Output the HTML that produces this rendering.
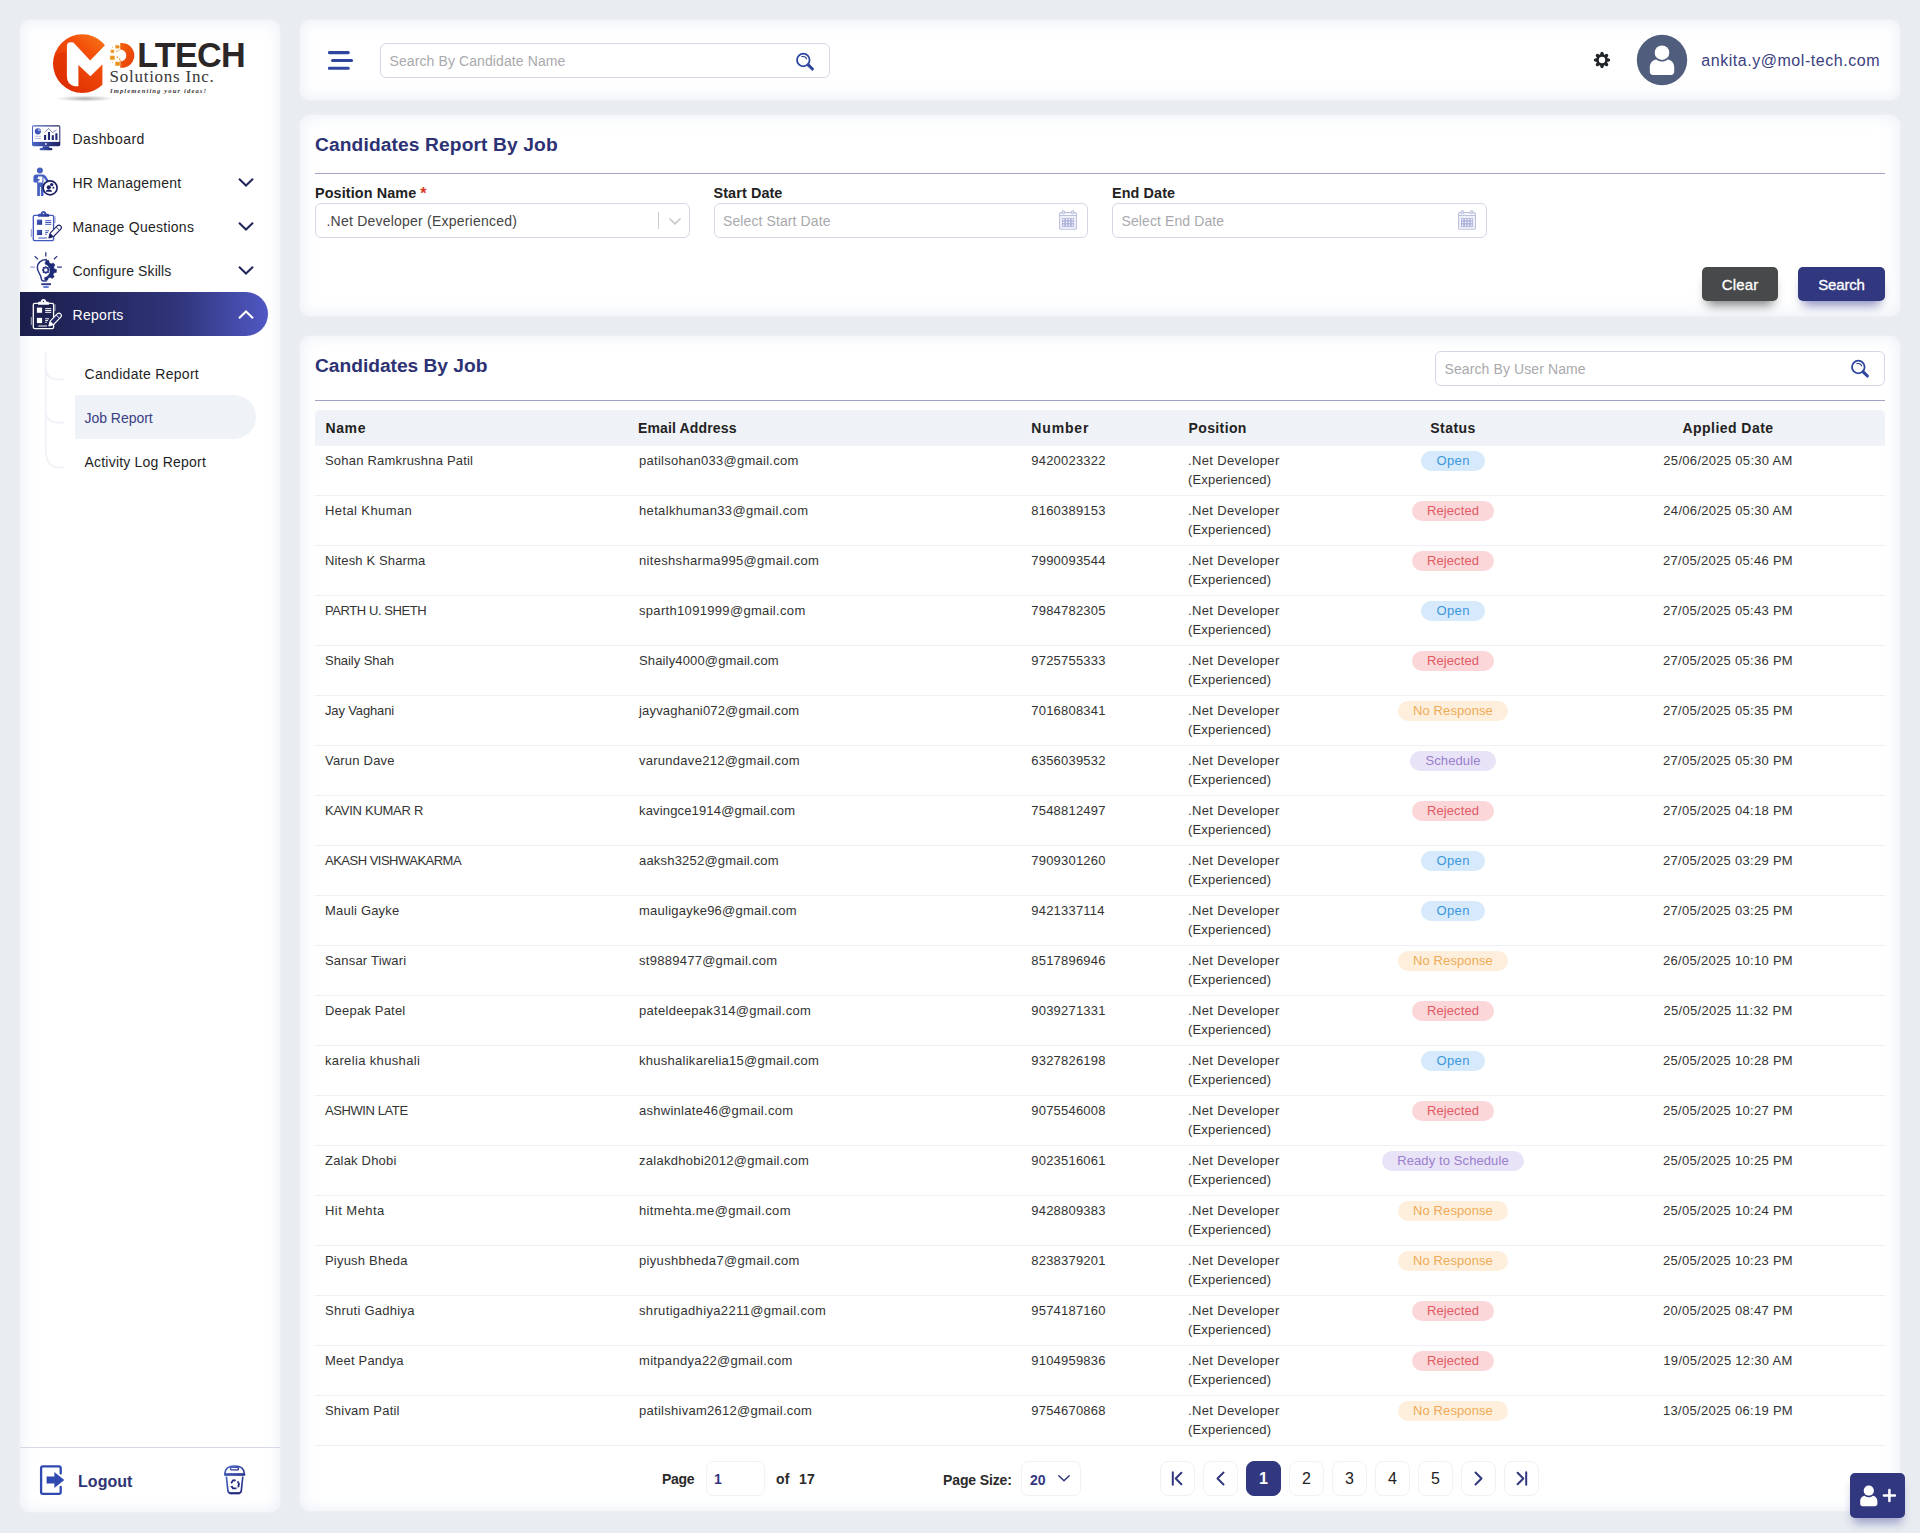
<!DOCTYPE html>
<html lang="en">
<head>
<meta charset="utf-8">
<title>Candidates Report By Job</title>
<style>
*{box-sizing:border-box;margin:0;padding:0}
html,body{width:1920px;height:1533px;overflow:hidden}
body{background:#e9ecf1;font-family:"Liberation Sans",sans-serif;color:#222;position:relative}
.card{position:absolute;background:#fff;border-radius:10px;box-shadow:inset 0 0 14px 2px rgba(224,231,242,.62),0 0 3px rgba(255,255,255,.5)}
.abs{position:absolute}
/* sidebar */
#side{left:20px;top:20px;width:260px;height:1492px}
.mi{position:absolute;left:0;width:248px;height:44px}
.mi .t{position:absolute;left:52.500px;top:1px;line-height:44px;font-size:14px;letter-spacing:.3px;color:#1f1f1f;white-space:nowrap}
.mi svg.ic{position:absolute}
.mi svg.ch{position:absolute;left:217px;top:17px}
.mi.act{background:linear-gradient(90deg,#1b1e4b 0%,#252963 35%,#31367c 65%,#5058c4 100%);border-radius:0 22px 22px 0}
.mi.act .t{color:#fff}
.si{position:absolute;left:55px;width:181px;height:44px;border-radius:0 22px 22px 0}
.si .t{position:absolute;left:9.500px;top:1px;line-height:44px;font-size:14px;letter-spacing:.3px;color:#1f1f1f;white-space:nowrap}
.si.act{background:#eff2f6}
.si.act .t{color:#3a4186}
#sdiv{left:0;top:1427px;width:260px;height:1px;background:#d5d8e6}
#logout{left:58px;top:1450.500px;font-size:16px;font-weight:700;color:#2f3472;line-height:22px;letter-spacing:.05px}
/* topbar */
#top{left:300px;top:20px;width:1600px;height:80px}
.inp{position:absolute;border:1px solid #d5d7e9;border-radius:6px;background:#fff;height:35px}
.inp .ph{position:absolute;left:8.500px;top:1px;line-height:33px;font-size:14px;color:#a9a9ad;letter-spacing:.1px;white-space:nowrap}
#email{right:20px;top:28px;line-height:26px;font-size:16px;color:#3a4080;letter-spacing:.54px;white-space:nowrap}
/* filter card */
#filt{left:300px;top:115px;width:1600px;height:201px}
h2{position:absolute;left:15px;font-size:19.200px;font-weight:700;color:#2c3274;white-space:nowrap;line-height:24px}
.hr{position:absolute;left:15px;width:1570px;height:1px;background:#a0a2c6}
.lbl{position:absolute;font-size:14.400px;font-weight:700;color:#222;line-height:18px;letter-spacing:.1px;white-space:nowrap}
.btn{position:absolute;top:152px;height:34px;border-radius:5px;color:#fff;font-size:15px;text-align:center;line-height:36px;letter-spacing:.15px;-webkit-text-stroke:.3px #fff}
/* table card */
#tbl{left:300px;top:336px;width:1600px;height:1175px}
#thead{position:absolute;left:15px;top:73.500px;width:1570px;height:36.500px;background:#eff2f6;border-radius:5px 5px 0 0}
#thead div{position:absolute;top:.5px;line-height:36px;font-size:14px;font-weight:700;color:#222;letter-spacing:.45px;white-space:nowrap}
.row{position:absolute;left:15px;width:1570px;height:50px;border-bottom:1px solid #eef0f4;font-size:13px;color:#333;letter-spacing:.2px}
.row div{position:absolute;top:5px;line-height:19px;white-space:nowrap}
.c1{left:10px}.c2{left:324px;letter-spacing:.27px}.c3{left:716.300px;letter-spacing:.2px}.c4{left:873px;letter-spacing:.35px}
.l2{letter-spacing:.18px}
.c5{left:1043px;width:190px;text-align:center}
.c6{left:1313px;width:200px;text-align:center;letter-spacing:.3px}
.bdg{display:inline-block;height:20px;line-height:20px;border-radius:10px;padding:0 15px;font-size:13px;letter-spacing:.1px;vertical-align:top}
.b-open{background:#d6eafb;color:#3b97de;letter-spacing:.35px;padding:0 15px 0 15.300px}
.b-rej{background:#fbd7d9;color:#e05a64}
.b-nor{background:#fdefdb;color:#efab57}
.b-sch{background:#e8e3f6;color:#9a7ed0}
.pg{position:absolute;top:1125px;width:35px;height:35px;border:1px solid #f1f2f6;border-radius:8px;text-align:center;line-height:33px;font-size:16px;color:#222}
.pg.on{background:#32387f;border-color:#32387f;color:#fff;font-weight:700}
.pg svg{position:absolute;left:0;top:0}
.pl{position:absolute;font-size:14px;font-weight:700;color:#2a2a2a;line-height:20px;letter-spacing:.3px;white-space:nowrap}
.pbox{position:absolute;top:1125px;height:35px;border:1px solid #f0f2f7;border-radius:7px;background:#fff}
#fab{left:1850px;top:1473px;width:55px;height:45px;border-radius:5px;background:#32387f;box-shadow:0 8px 10px -3px rgba(60,66,150,.45)}
</style>
</head>
<body>

<!-- SIDEBAR -->
<div class="card" id="side">
<svg class="abs" style="left:20px;top:5px" width="220" height="90" viewBox="40 25 220 90">
<defs>
<linearGradient id="lg1" x1="0.85" y1="0.05" x2="0.2" y2="0.9"><stop offset="0" stop-color="#f5821c"/><stop offset=".35" stop-color="#f4510a"/><stop offset="1" stop-color="#dd2c02"/></linearGradient>
<linearGradient id="lg2" x1="0" y1="0" x2="1" y2="1"><stop offset="0" stop-color="#f4620e"/><stop offset="1" stop-color="#e63a04"/></linearGradient>
<radialGradient id="lsh" cx=".5" cy=".5" r=".5"><stop offset="0" stop-color="#7d7d7d" stop-opacity=".62"/><stop offset=".6" stop-color="#9a9a9a" stop-opacity=".3"/><stop offset="1" stop-color="#bbb" stop-opacity="0"/></radialGradient>
<mask id="lmk" maskUnits="userSpaceOnUse" x="45" y="28" width="80" height="75"><circle cx="82.3" cy="63.6" r="29.3" fill="#fff"/><path d="M70.4 42.2 L73.4 42.4 L90.2 60.6 L105.9 44.300 L122 30 L122 100 L102.4 100 L102.4 64.6 L90.4 76.2 L78.4 65 L78.4 86.2 L74.5 86.2 Q66.9 84.5 66.9 76 L66.9 46 Q66.9 42.2 70.4 42.2Z" fill="#000"/></mask>
</defs>
<ellipse cx="85" cy="98.6" rx="30" ry="3.2" fill="url(#lsh)"/>
<g mask="url(#lmk)">
<rect x="50" y="30" width="70" height="70" fill="url(#lg1)"/>
<path d="M50 58 Q60 52 72 51 L72 100 L50 100Z" fill="#de2d00" opacity=".55"/>
</g>
<path d="M120.300 43.100 A12.4 12.4 0 1 1 120.300 67.700 L120.300 61.500 A6 6 0 0 0 120.300 49.500Z" fill="url(#lg2)"/>
<g fill="#e8911f" stroke="#f6c070" stroke-width=".5">
<rect x="115.3" y="45.2" width="3.9" height="3"/><rect x="110.9" y="49.9" width="3.1" height="3"/><rect x="110.1" y="55.9" width="4.6" height="3.9"/><rect x="115.3" y="61.9" width="4.6" height="3.9"/>
</g>
<g fill="#e57a18"><rect x="116.3" y="50.6" width="1.2" height="1.2"/><rect x="118.4" y="49.6" width="1" height="1"/><rect x="116.7" y="56.6" width="1.3" height="1.3"/><rect x="119" y="58.6" width="1.2" height="1.2"/><rect x="120.3" y="44.2" width="1" height="1"/><rect x="119.8" y="47.2" width="1" height="1"/><rect x="112" y="46.8" width=".8" height=".8"/><rect x="112.3" y="61.8" width=".9" height=".9"/><rect x="120.3" y="60.4" width="1" height="1"/><rect x="120.6" y="64.3" width="1" height="1"/></g>
<text x="137.200" y="66.7" font-family="Liberation Sans, sans-serif" font-weight="700" font-size="34.2" fill="#2b2727" letter-spacing="-.7">LTECH</text>
<text x="109.5" y="82.3" font-family="Liberation Serif, serif" font-size="17" fill="#3a3838" letter-spacing=".75">Solutions Inc.</text>
<text x="110" y="93" font-family="Liberation Serif, serif" font-style="italic" font-weight="700" font-size="6.6" fill="#3a3838" letter-spacing="1.12">Implementing your ideas!</text>
</svg>
<svg width="0" height="0" style="position:absolute"><defs>
<linearGradient id="ig" x1="0" y1="0" x2="1" y2="0"><stop offset="0" stop-color="#4a66c8"/><stop offset="1" stop-color="#1b1f5e"/></linearGradient>
<linearGradient id="ig2" x1="0" y1="0" x2="1" y2="1"><stop offset="0" stop-color="#4864c6"/><stop offset="1" stop-color="#27328a"/></linearGradient>
</defs></svg>
<div class="mi" style="top:96px"><svg class="ic" style="left:10px;top:7px" width="34" height="30" viewBox="30 123 34 30">
<rect x="32" y="125.2" width="28.3" height="21" rx="1.6" fill="url(#ig)"/>
<rect x="33" y="126.5" width="26.3" height="15.4" fill="#fff"/>
<circle cx="37.9" cy="131.3" r="3.1" fill="#3d55b8"/><path d="M37.9 131.3V128.2A3.1 3.1 0 0 1 41 131.3Z" fill="#8fa0dc"/>
<path d="M34.7 136.3h6.3M34.7 138.5h6.3" stroke="#b9bede" stroke-width="1.1"/>
<path d="M45.1 139.9v-5M49 139.9v-7.9M52.8 139.9v-4.7M56.4 139.9v-6.7" stroke="#202a78" stroke-width="2.1"/>
<path d="M44.9 132.3l3.8-3.9 3.7 4.2 4.2-2.6" fill="none" stroke="#4a5590" stroke-width=".7"/>
<circle cx="45.9" cy="144.1" r="1" fill="#dfe4f7"/>
<path d="M43 146.2h6l.8 2h-7.6z" fill="#2c3c98"/>
<rect x="39.6" y="148" width="12.8" height="2.3" rx="1.1" fill="url(#ig)"/>
</svg><span class="t" style="letter-spacing:.42px">Dashboard</span></div>
<div class="mi" style="top:140px"><svg class="ic" style="left:10px;top:5px" width="34" height="34" viewBox="30 165 34 34">
<circle cx="39.9" cy="170.6" r="3" fill="#4661c2"/>
<path d="M37.3 174.4h5.2c1.3 0 2.4.5 3.2 1.6l3 4.6-1.9 1.3-3.3-4.6v18.6h-2.6v-9h-1v9h-2.7v-13.4h-2.3c-.9 0-1.5-.6-1.5-1.5v-3.600c0-1.700 1.200-3 2.900-3z" fill="#4560c0"/>
<path d="M38.3 176.6h4.100v5.800h-4.100v-1.800h1.300v-1.500h-2.200z" fill="#fff"/>
<circle cx="50.1" cy="187.8" r="7" fill="#fff" stroke="#1d2164" stroke-width="1.7"/>
<circle cx="51.7" cy="184.600" r="1.700" fill="#1d2470"/><path d="M52.800 186.5c1.200.3 1.800 1 1.800 2h-2.300z" fill="#1d2470"/>
<circle cx="48.800" cy="187.300" r="2.100" fill="#1b2268"/><path d="M45.800 191.700c0-1.600 1.200-2.300 3-2.300s3.200.7 3.200 2.300z" fill="#1b2268"/>
</svg><span class="t" style="letter-spacing:.24px">HR Management</span><svg class="ch" width="18" height="11" viewBox="0 0 18 11"><path d="M2 1.8 L9 8.5 L16 1.8" fill="none" stroke="#23265a" stroke-width="2.1" stroke-linecap="butt" stroke-linejoin="miter"/></svg></div>
<div class="mi" style="top:184px"><svg class="ic" style="left:9px;top:3px" width="36" height="36" viewBox="29 206.900 36 36">
<rect x="33.300" y="215.200" width="20.300" height="25.300" rx="1.400" fill="none" stroke="#4058ba" stroke-width="1.300"/>
<path d="M38 216.700v-1.800c0-.7.500-1.200 1.200-1.200h1.400c.2-1.700 1.400-2.900 2.900-2.900s2.700 1.200 2.900 2.900h1.400c.7 0 1.200.5 1.200 1.200v1.800z" fill="url(#ig2)"/>
<circle cx="43.500" cy="213.400" r=".700" fill="#fff"/>
<rect x="36.900" y="219.500" width="5.200" height="5.200" fill="url(#ig2)"/><rect x="36.900" y="229.800" width="5.200" height="5.200" fill="url(#ig2)"/>
<path d="M45.200 220.600h6.100M45.200 222.400h6.100M45.200 224.200h6.100M45.200 230.700h3.800M45.200 232.500h2.800M45.200 234.200h1.600M38.300 237.900h8.600" stroke="#4058ba" stroke-width="1"/>
<path d="M31.300 229v7.800M55 216.200v6.800" stroke="#4058ba" stroke-width=".9" opacity=".7"/>
<path d="M48.900 237.800l1.300-4.800 7-7.200c1-1 2.400-1 3.400 0 1 1 1 2.400 0 3.400l-7 7.200z" fill="#fff" stroke="#1c2268" stroke-width="1.100" stroke-linejoin="round"/>
<path d="M48.900 237.800l1.300-4.800 3.400 3.400z" fill="#1c2268"/>
<path d="M56.200 226.800l3.400 3.400" stroke="#1c2268" stroke-width=".9"/>
</svg><span class="t" style="letter-spacing:.26px">Manage Questions</span><svg class="ch" width="18" height="11" viewBox="0 0 18 11"><path d="M2 1.8 L9 8.5 L16 1.8" fill="none" stroke="#23265a" stroke-width="2.1" stroke-linecap="butt" stroke-linejoin="miter"/></svg></div>
<div class="mi" style="top:228px"><svg class="ic" style="left:8px;top:2px" width="38" height="40" viewBox="28 250 38 40">
<path d="M45.800 252.300v4.100M34.700 256.100l3.200 3.200M57.200 256.100l-3.300 3.200M57.100 267.100h4.800" stroke="#2b3684" stroke-width="1.300" fill="none"/>
<path d="M30.100 267.100h4.800" stroke="#9aa8e0" stroke-width="1.300"/>
<path d="M46.300 259.500c-5.200.1-9 3.700-9 8 0 3.200 1.800 5.200 3 7.800.6 1.300.9 2.500 1.100 3.700.2 1.300 1 2.100 2.300 2.100h2.500" fill="none" stroke="#2b3684" stroke-width="1.500" stroke-linecap="round"/>
<path d="M45.300 262.300l.9-2.200 2.700.5.300 2.200c.7.300 1.300.7 1.900 1.100l2.100-1 1.800 2.100-1.300 1.900c.3.600.5 1.300.6 2l2.200.7-.2 2.800-2.300.4c-.2.700-.5 1.300-.9 1.900l1.100 2.100-2.100 1.800-1.900-1.300c-.6.300-1.300.6-2 .7l-.6 2.200-2.700-.1-.5-2.400c3.200-.6 5.700-3.500 5.700-6.900 0-3.300-2.200-6-5.100-6.800z" fill="#1c2a78" stroke="#1c2a78" stroke-width=".5" stroke-linejoin="round"/>
<g fill="none" stroke="#2b3684"><circle cx="45.800" cy="270" r="2.500" stroke-width="1.500"/><path d="M45.800 266.200v1.200M45.800 272.600v1.200M42 270h1.200M48.400 270h1.200M43.100 267.300l.9.900M47.600 271.800l.9.900M43.100 272.700l.9-.9M47.600 268.200l.9-.9" stroke-width="1.500"/></g>
<path d="M41.300 284.200h9.700" stroke="#2b3684" stroke-width="1.900"/>
<path d="M43.300 287h5.400" stroke="#5d78d4" stroke-width="1.900"/>
</svg><span class="t" style="letter-spacing:.1px">Configure Skills</span><svg class="ch" width="18" height="11" viewBox="0 0 18 11"><path d="M2 1.8 L9 8.5 L16 1.8" fill="none" stroke="#23265a" stroke-width="2.1" stroke-linecap="butt" stroke-linejoin="miter"/></svg></div>
<div class="mi act" style="top:272px"><svg class="ic" style="left:9px;top:3px" width="36" height="36" viewBox="29 206.900 36 36">
<rect x="33.300" y="215.200" width="20.300" height="25.300" rx="1.400" fill="none" stroke="#fff" stroke-width="1.300"/>
<path d="M38 216.700v-1.800c0-.7.500-1.200 1.200-1.200h1.400c.2-1.700 1.400-2.900 2.900-2.900s2.700 1.200 2.900 2.900h1.400c.7 0 1.200.5 1.200 1.200v1.800z" fill="#fff"/>
<circle cx="43.500" cy="213.400" r=".700" fill="#262a66"/>
<rect x="36.900" y="219.500" width="5.200" height="5.200" fill="#fff"/><rect x="36.900" y="229.800" width="5.200" height="5.200" fill="#fff"/>
<path d="M45.200 220.600h6.100M45.200 222.400h6.100M45.200 224.200h6.100M45.200 230.700h3.800M45.200 232.500h2.800M45.200 234.200h1.600M38.300 237.900h8.600" stroke="#fff" stroke-width="1"/>
<path d="M31.300 229v7.800M55 216.200v6.800" stroke="#fff" stroke-width=".9" opacity=".7"/>
<path d="M48.900 237.800l1.300-4.800 7-7.200c1-1 2.400-1 3.400 0 1 1 1 2.400 0 3.400l-7 7.200z" fill="#262a66" stroke="#fff" stroke-width="1.100" stroke-linejoin="round"/>
<path d="M48.900 237.800l1.300-4.800 3.400 3.400z" fill="#fff"/>
<path d="M56.200 226.800l3.400 3.400" stroke="#fff" stroke-width=".9"/>
</svg><span class="t">Reports</span><svg class="ch" width="18" height="11" viewBox="0 0 18 11"><path d="M2 9.2 L9 2.5 L16 9.2" fill="none" stroke="#fff" stroke-width="2.1" stroke-linecap="butt" stroke-linejoin="miter"/></svg></div>
<svg class="abs" style="left:20px;top:325px" width="40" height="130" viewBox="40 345 40 130"><path d="M45.700 351.500V450 M45.700 367.300q0 12 12 12h7 M45.700 410.600q0 12 12 12h7 M45.700 448q0 19.300 12 19.300h7" fill="none" stroke="#f0f2f7" stroke-width="1.800"/></svg>
<div class="si" style="top:331px"><span class="t">Candidate Report</span></div>
<div class="si act" style="top:375px"><span class="t" style="letter-spacing:-.03px">Job Report</span></div>
<div class="si" style="top:419px"><span class="t" style="letter-spacing:.21px">Activity Log Report</span></div>
<div class="abs" id="sdiv"></div>
<svg class="abs" style="left:18px;top:1443px" width="30" height="34" viewBox="38 1463 30 34">
<path d="M60.700 1473.500v-5.300c0-1-.8-1.800-1.800-1.800h-16c-1 0-1.800.8-1.800 1.800v23.800c0 1 .8 1.800 1.800 1.800h16c1 0 1.800-.8 1.800-1.800v-5.200" fill="none" stroke="#2f49b0" stroke-width="2.300" stroke-linecap="round"/>
<path d="M46.600 1476.600h7.800v-4.600l9.800 8-9.800 8v-4.600h-7.800z" fill="#2f49b0"/>
</svg>
<div class="abs" id="logout">Logout</div>
<svg class="abs" style="left:202px;top:1443px" width="26" height="34" viewBox="222 1463 26 34">
<defs><linearGradient id="tg" x1="0" y1="0" x2="1" y2="1"><stop offset="0" stop-color="#4a66c8"/><stop offset="1" stop-color="#232a7c"/></linearGradient></defs>
<path d="M224.800 1474.300c0-5.500 4-8.300 9.800-8.300s9.800 2.800 9.800 8.300z" fill="#fff" stroke="url(#tg)" stroke-width="1.700"/>
<rect x="230.600" y="1467.300" width="7.800" height="2.600" rx="1" fill="#fff" stroke="url(#tg)" stroke-width="1.400"/>
<rect x="224" y="1473.200" width="21.200" height="2.600" rx="1.300" fill="url(#tg)"/>
<path d="M226.400 1476.500l1.500 14.200c.2 1.600 1.100 2.500 2.700 2.500h8c1.600 0 2.500-.9 2.700-2.500l1.500-14.200" fill="#fff" stroke="url(#tg)" stroke-width="1.700"/>
<path d="M229.500 1493.400h10.200" stroke="#232a7c" stroke-width="1.900"/>
<g fill="none" stroke="#232a7c" stroke-width="1.800"><path d="M231.200 1483.200l1.800-2.900 1.800 0"/><path d="M237.600 1481.300l1.500 2.900-1 1.800"/><path d="M236.500 1488.300h-3.600l-1-1.900"/></g>
<g fill="#232a7c"><path d="M234.300 1478.900l2 1.400-2 1.400z"/><path d="M239.800 1486.800l-2.300.9.300-2.400z"/><path d="M230.400 1486.200l2.300-.5-.9 2.200z"/></g>
</svg>
</div>

<!-- TOPBAR -->
<div class="card" id="top">
<svg class="abs" style="left:28px;top:30px" width="26" height="21" viewBox="0 0 26 21"><path d="M1.450 2.600H20.250M4.550 10.500H23.550M1.450 18.300H20.250" fill="none" stroke="#2f469f" stroke-width="3.100" stroke-linecap="round"/></svg>
<div class="inp" style="left:80px;top:23px;width:450px"><span class="ph">Search By Candidate Name</span><svg style="position:absolute;left:414px;top:8.300px" width="20" height="20" viewBox="0 0 20 20"><circle cx="8.300" cy="8" r="6.300" fill="none" stroke="#2f469f" stroke-width="1.800"/><path d="M13.200 12.800l4.200 4.200" stroke="#2f469f" stroke-width="3.100" stroke-linecap="round"/><path d="M6.400 4.700a4.100 4.100 0 0 1 5.300 2.500" fill="none" stroke="#2c3f8c" stroke-width="1.100"/></svg></div>
<svg class="abs" style="left:1291.900px;top:29.900px" width="20" height="20" viewBox="-10 -10 20 20"><g fill="#212529"><circle r="5.900"/><g transform="rotate(0)"><rect x="-1.600" y="-6.600" width="3.200" height="3"/><circle cx="0" cy="-6.600" r="1.600"/></g><g transform="rotate(45)"><rect x="-1.600" y="-6.600" width="3.200" height="3"/><circle cx="0" cy="-6.600" r="1.600"/></g><g transform="rotate(90)"><rect x="-1.600" y="-6.600" width="3.200" height="3"/><circle cx="0" cy="-6.600" r="1.600"/></g><g transform="rotate(135)"><rect x="-1.600" y="-6.600" width="3.200" height="3"/><circle cx="0" cy="-6.600" r="1.600"/></g><g transform="rotate(180)"><rect x="-1.600" y="-6.600" width="3.200" height="3"/><circle cx="0" cy="-6.600" r="1.600"/></g><g transform="rotate(225)"><rect x="-1.600" y="-6.600" width="3.200" height="3"/><circle cx="0" cy="-6.600" r="1.600"/></g><g transform="rotate(270)"><rect x="-1.600" y="-6.600" width="3.200" height="3"/><circle cx="0" cy="-6.600" r="1.600"/></g><g transform="rotate(315)"><rect x="-1.600" y="-6.600" width="3.200" height="3"/><circle cx="0" cy="-6.600" r="1.600"/></g></g><circle r="3.200" fill="#fff"/></svg>
<svg class="abs" style="left:1336px;top:14px" width="52" height="52" viewBox="-26 -26 52 52"><circle r="25.200" fill="#515d7c"/><circle cx="0" cy="-7.300" r="7.300" fill="#fff"/><path d="M-12.200 11.700v-4.700c0-4.300 3-7.300 6.600-7.600 1.600 1.400 3.500 2.100 5.600 2.100s4-.7 5.600-2.100c3.600.3 6.600 3.300 6.600 7.600v4.700c0 1.900-1.300 3.200-3.200 3.200h-18c-1.900 0-3.200-1.300-3.200-3.200z" fill="#fff"/></svg>
<div class="abs" id="email">ankita.y@mol-tech.com</div>
</div>

<!-- FILTER CARD -->
<div class="card" id="filt">
<h2 style="top:17.500px;letter-spacing:.12px">Candidates Report By Job</h2>
<div class="hr" style="top:58px"></div>
<div class="lbl" style="left:15px;top:69px">Position Name<span style="color:#d8371f;margin-left:4px;font-weight:700;font-size:16px;line-height:10px;position:relative;top:1px">*</span></div>
<div class="lbl" style="left:413.5px;top:69px">Start Date</div>
<div class="lbl" style="left:812px;top:69px">End Date</div>
<div class="inp" style="left:15px;top:88px;width:375px"><span class="ph" style="left:10.500px;color:#444;letter-spacing:.22px">.Net Developer (Experienced)</span><span style="position:absolute;left:342px;top:8px;width:1px;height:17px;background:#ccc"></span><svg style="position:absolute;left:352px;top:13px" width="14" height="9" viewBox="0 0 14 9"><path d="M2 2 L7 6.800 L12 2" fill="none" stroke="#c8c8c8" stroke-width="1.700" stroke-linecap="round" stroke-linejoin="round"/></svg></div>
<div class="inp" style="left:413.5px;top:88px;width:374.5px"><span class="ph">Select Start Date</span><svg style="position:absolute;left:343.500px;top:5px" width="20" height="22" viewBox="0 0 20 22"><g fill="none" stroke="#bcc0de" stroke-width="1.100"><rect x="1.600" y="3.600" width="16.800" height="16.600" rx="1.300" fill="#fff"/><path d="M1.600 6.500h16.800"/><circle cx="5.300" cy="3.300" r="1.400" fill="#eef0fb"/><circle cx="14.700" cy="3.300" r="1.400" fill="#eef0fb"/></g><rect x="3" y="8" width="14" height="10.800" fill="none" stroke="#dcdef0" stroke-width=".8"/><rect x="4" y="9.100" width="11.900" height="8.800" fill="#b1b5de"/><g fill="#fff"><rect x="5.0" y="9.9" width="1.200" height="1.200"/><rect x="8.0" y="9.9" width="1.200" height="1.200"/><rect x="10.8" y="9.9" width="1.200" height="1.200"/><rect x="13.7" y="9.9" width="1.200" height="1.200"/><rect x="5.0" y="12.7" width="1.200" height="1.200"/><rect x="8.0" y="12.7" width="1.200" height="1.200"/><rect x="10.8" y="12.7" width="1.200" height="1.200"/><rect x="13.7" y="12.7" width="1.200" height="1.200"/><rect x="5.0" y="15.6" width="1.200" height="1.200"/><rect x="8.0" y="15.6" width="1.200" height="1.200"/><rect x="10.8" y="15.6" width="1.200" height="1.200"/><rect x="13.7" y="15.6" width="1.200" height="1.200"/></g></svg></div>
<div class="inp" style="left:812px;top:88px;width:375px"><span class="ph">Select End Date</span><svg style="position:absolute;left:343.500px;top:5px" width="20" height="22" viewBox="0 0 20 22"><g fill="none" stroke="#bcc0de" stroke-width="1.100"><rect x="1.600" y="3.600" width="16.800" height="16.600" rx="1.300" fill="#fff"/><path d="M1.600 6.500h16.800"/><circle cx="5.300" cy="3.300" r="1.400" fill="#eef0fb"/><circle cx="14.700" cy="3.300" r="1.400" fill="#eef0fb"/></g><rect x="3" y="8" width="14" height="10.800" fill="none" stroke="#dcdef0" stroke-width=".8"/><rect x="4" y="9.100" width="11.900" height="8.800" fill="#b1b5de"/><g fill="#fff"><rect x="5.0" y="9.9" width="1.200" height="1.200"/><rect x="8.0" y="9.9" width="1.200" height="1.200"/><rect x="10.8" y="9.9" width="1.200" height="1.200"/><rect x="13.7" y="9.9" width="1.200" height="1.200"/><rect x="5.0" y="12.7" width="1.200" height="1.200"/><rect x="8.0" y="12.7" width="1.200" height="1.200"/><rect x="10.8" y="12.7" width="1.200" height="1.200"/><rect x="13.7" y="12.7" width="1.200" height="1.200"/><rect x="5.0" y="15.6" width="1.200" height="1.200"/><rect x="8.0" y="15.6" width="1.200" height="1.200"/><rect x="10.8" y="15.6" width="1.200" height="1.200"/><rect x="13.7" y="15.6" width="1.200" height="1.200"/></g></svg></div>
<div class="btn" style="left:1402px;width:76px;background:#47494b;box-shadow:0 9px 11px -5px rgba(0,0,0,.5)">Clear</div>
<div class="btn" style="left:1498px;width:87px;background:#32387f;letter-spacing:-.15px;box-shadow:0 9px 11px -5px rgba(50,56,140,.6)">Search</div>
</div>

<!-- TABLE CARD -->
<div class="card" id="tbl">
<h2 style="top:17.500px;letter-spacing:-.02px">Candidates By Job</h2>
<div class="inp" style="left:1135px;top:15px;width:450px"><span class="ph">Search By User Name</span><svg style="position:absolute;left:414px;top:7px" width="20" height="20" viewBox="0 0 20 20"><circle cx="8.300" cy="8" r="6.300" fill="none" stroke="#2f469f" stroke-width="1.800"/><path d="M13.200 12.800l4.200 4.200" stroke="#2f469f" stroke-width="3.100" stroke-linecap="round"/><path d="M6.400 4.700a4.100 4.100 0 0 1 5.300 2.500" fill="none" stroke="#2c3f8c" stroke-width="1.100"/></svg></div>
<div class="hr" style="top:64px"></div>
<div id="thead"><div style="left:10.500px;letter-spacing:.6px">Name</div><div style="left:323px;letter-spacing:.14px">Email Address</div><div style="left:716.300px;letter-spacing:.85px">Number</div><div style="left:873.500px;letter-spacing:.38px">Position</div><div style="left:1043px;width:190px;text-align:center">Status</div><div style="left:1313px;width:200px;text-align:center">Applied Date</div></div>
<div class="row" style="top:110px"><div class="c1" style="letter-spacing:0.200px">Sohan Ramkrushna Patil</div><div class="c2" style="letter-spacing:0.270px">patilsohan033@gmail.com</div><div class="c3">9420023322</div><div class="c4">.Net Developer<br><span class="l2">(Experienced)</span></div><div class="c5"><span class="bdg b-open">Open</span></div><div class="c6">25/06/2025 05:30 AM</div></div>
<div class="row" style="top:160px"><div class="c1" style="letter-spacing:0.400px">Hetal Khuman</div><div class="c2" style="letter-spacing:0.347px">hetalkhuman33@gmail.com</div><div class="c3">8160389153</div><div class="c4">.Net Developer<br><span class="l2">(Experienced)</span></div><div class="c5"><span class="bdg b-rej">Rejected</span></div><div class="c6">24/06/2025 05:30 AM</div></div>
<div class="row" style="top:210px"><div class="c1" style="letter-spacing:0.143px">Nitesh K Sharma</div><div class="c2" style="letter-spacing:0.320px">niteshsharma995@gmail.com</div><div class="c3">7990093544</div><div class="c4">.Net Developer<br><span class="l2">(Experienced)</span></div><div class="c5"><span class="bdg b-rej">Rejected</span></div><div class="c6">27/05/2025 05:46 PM</div></div>
<div class="row" style="top:260px"><div class="c1" style="letter-spacing:-0.423px">PARTH U. SHETH</div><div class="c2" style="letter-spacing:0.320px">sparth1091999@gmail.com</div><div class="c3">7984782305</div><div class="c4">.Net Developer<br><span class="l2">(Experienced)</span></div><div class="c5"><span class="bdg b-open">Open</span></div><div class="c6">27/05/2025 05:43 PM</div></div>
<div class="row" style="top:310px"><div class="c1" style="letter-spacing:-0.040px">Shaily Shah</div><div class="c2" style="letter-spacing:0.149px">Shaily4000@gmail.com</div><div class="c3">9725755333</div><div class="c4">.Net Developer<br><span class="l2">(Experienced)</span></div><div class="c5"><span class="bdg b-rej">Rejected</span></div><div class="c6">27/05/2025 05:36 PM</div></div>
<div class="row" style="top:360px"><div class="c1" style="letter-spacing:-0.140px">Jay Vaghani</div><div class="c2" style="letter-spacing:0.175px">jayvaghani072@gmail.com</div><div class="c3">7016808341</div><div class="c4">.Net Developer<br><span class="l2">(Experienced)</span></div><div class="c5"><span class="bdg b-nor">No Response</span></div><div class="c6">27/05/2025 05:35 PM</div></div>
<div class="row" style="top:410px"><div class="c1" style="letter-spacing:0.200px">Varun Dave</div><div class="c2" style="letter-spacing:0.270px">varundave212@gmail.com</div><div class="c3">6356039532</div><div class="c4">.Net Developer<br><span class="l2">(Experienced)</span></div><div class="c5"><span class="bdg b-sch">Schedule</span></div><div class="c6">27/05/2025 05:30 PM</div></div>
<div class="row" style="top:460px"><div class="c1" style="letter-spacing:-0.275px">KAVIN KUMAR R</div><div class="c2" style="letter-spacing:0.160px">kavingce1914@gmail.com</div><div class="c3">7548812497</div><div class="c4">.Net Developer<br><span class="l2">(Experienced)</span></div><div class="c5"><span class="bdg b-rej">Rejected</span></div><div class="c6">27/05/2025 04:18 PM</div></div>
<div class="row" style="top:510px"><div class="c1" style="letter-spacing:-0.506px">AKASH VISHWAKARMA</div><div class="c2" style="letter-spacing:0.198px">aaksh3252@gmail.com</div><div class="c3">7909301260</div><div class="c4">.Net Developer<br><span class="l2">(Experienced)</span></div><div class="c5"><span class="bdg b-open">Open</span></div><div class="c6">27/05/2025 03:29 PM</div></div>
<div class="row" style="top:560px"><div class="c1" style="letter-spacing:0.200px">Mauli Gayke</div><div class="c2" style="letter-spacing:0.237px">mauligayke96@gmail.com</div><div class="c3">9421337114</div><div class="c4">.Net Developer<br><span class="l2">(Experienced)</span></div><div class="c5"><span class="bdg b-open">Open</span></div><div class="c6">27/05/2025 03:25 PM</div></div>
<div class="row" style="top:610px"><div class="c1" style="letter-spacing:0.200px">Sansar Tiwari</div><div class="c2" style="letter-spacing:0.270px">st9889477@gmail.com</div><div class="c3">8517896946</div><div class="c4">.Net Developer<br><span class="l2">(Experienced)</span></div><div class="c5"><span class="bdg b-nor">No Response</span></div><div class="c6">26/05/2025 10:10 PM</div></div>
<div class="row" style="top:660px"><div class="c1" style="letter-spacing:0.200px">Deepak Patel</div><div class="c2" style="letter-spacing:0.300px">pateldeepak314@gmail.com</div><div class="c3">9039271331</div><div class="c4">.Net Developer<br><span class="l2">(Experienced)</span></div><div class="c5"><span class="bdg b-rej">Rejected</span></div><div class="c6">25/05/2025 11:32 PM</div></div>
<div class="row" style="top:710px"><div class="c1" style="letter-spacing:0.353px">karelia khushali</div><div class="c2" style="letter-spacing:0.270px">khushalikarelia15@gmail.com</div><div class="c3">9327826198</div><div class="c4">.Net Developer<br><span class="l2">(Experienced)</span></div><div class="c5"><span class="bdg b-open">Open</span></div><div class="c6">25/05/2025 10:28 PM</div></div>
<div class="row" style="top:760px"><div class="c1" style="letter-spacing:-0.410px">ASHWIN LATE</div><div class="c2" style="letter-spacing:0.270px">ashwinlate46@gmail.com</div><div class="c3">9075546008</div><div class="c4">.Net Developer<br><span class="l2">(Experienced)</span></div><div class="c5"><span class="bdg b-rej">Rejected</span></div><div class="c6">25/05/2025 10:27 PM</div></div>
<div class="row" style="top:810px"><div class="c1" style="letter-spacing:0.200px">Zalak Dhobi</div><div class="c2" style="letter-spacing:0.270px">zalakdhobi2012@gmail.com</div><div class="c3">9023516061</div><div class="c4">.Net Developer<br><span class="l2">(Experienced)</span></div><div class="c5"><span class="bdg b-sch">Ready to Schedule</span></div><div class="c6">25/05/2025 10:25 PM</div></div>
<div class="row" style="top:860px"><div class="c1" style="letter-spacing:0.463px">Hit Mehta</div><div class="c2" style="letter-spacing:0.375px">hitmehta.me@gmail.com</div><div class="c3">9428809383</div><div class="c4">.Net Developer<br><span class="l2">(Experienced)</span></div><div class="c5"><span class="bdg b-nor">No Response</span></div><div class="c6">25/05/2025 10:24 PM</div></div>
<div class="row" style="top:910px"><div class="c1" style="letter-spacing:0.200px">Piyush Bheda</div><div class="c2" style="letter-spacing:0.332px">piyushbheda7@gmail.com</div><div class="c3">8238379201</div><div class="c4">.Net Developer<br><span class="l2">(Experienced)</span></div><div class="c5"><span class="bdg b-nor">No Response</span></div><div class="c6">25/05/2025 10:23 PM</div></div>
<div class="row" style="top:960px"><div class="c1" style="letter-spacing:0.262px">Shruti Gadhiya</div><div class="c2" style="letter-spacing:0.347px">shrutigadhiya2211@gmail.com</div><div class="c3">9574187160</div><div class="c4">.Net Developer<br><span class="l2">(Experienced)</span></div><div class="c5"><span class="bdg b-rej">Rejected</span></div><div class="c6">20/05/2025 08:47 PM</div></div>
<div class="row" style="top:1010px"><div class="c1" style="letter-spacing:0.200px">Meet Pandya</div><div class="c2" style="letter-spacing:0.325px">mitpandya22@gmail.com</div><div class="c3">9104959836</div><div class="c4">.Net Developer<br><span class="l2">(Experienced)</span></div><div class="c5"><span class="bdg b-rej">Rejected</span></div><div class="c6">19/05/2025 12:30 AM</div></div>
<div class="row" style="top:1060px"><div class="c1" style="letter-spacing:0.200px">Shivam Patil</div><div class="c2" style="letter-spacing:0.270px">patilshivam2612@gmail.com</div><div class="c3">9754670868</div><div class="c4">.Net Developer<br><span class="l2">(Experienced)</span></div><div class="c5"><span class="bdg b-nor">No Response</span></div><div class="c6">13/05/2025 06:19 PM</div></div>
<div class="pl" style="left:362px;top:1133px;letter-spacing:-.3px">Page</div>
<div class="pbox" style="left:406px;width:59px"><span style="position:absolute;left:7px;top:1px;line-height:33px;font-size:14px;font-weight:700;color:#32387f">1</span></div>
<div class="pl" style="left:476px;top:1133px">of</div><div class="pl" style="left:499px;top:1133px">17</div>
<div class="pl" style="left:643px;top:1134px;letter-spacing:-.12px">Page Size:</div>
<div class="pbox" style="left:721px;width:60px"><span style="position:absolute;left:8px;top:1.500px;line-height:33px;font-size:14px;font-weight:700;color:#32387f">20</span><svg style="position:absolute;left:35px;top:12px" width="14" height="9" viewBox="0 0 14 9"><path d="M1.800 1.800 L7 6.800 L12.200 1.800" fill="none" stroke="#32387f" stroke-width="1.500" stroke-linecap="round" stroke-linejoin="round"/></svg></div>
<div class="pg" style="left:860px"><svg width="33" height="33" viewBox="0 0 33 33"><path d="M11.800 10.300v12.400M20.400 10.800l-5.700 5.700 5.700 5.700" fill="none" stroke="#32387f" stroke-width="2" stroke-linecap="round" stroke-linejoin="round"/></svg></div>
<div class="pg" style="left:903px"><svg width="33" height="33" viewBox="0 0 33 33"><path d="M19.5 10.5l-6 6 6 6" fill="none" stroke="#32387f" stroke-width="2" stroke-linecap="round" stroke-linejoin="round"/></svg></div>
<div class="pg on" style="left:946px">1</div>
<div class="pg" style="left:989px">2</div>
<div class="pg" style="left:1032px">3</div>
<div class="pg" style="left:1075px">4</div>
<div class="pg" style="left:1118px">5</div>
<div class="pg" style="left:1161px"><svg width="33" height="33" viewBox="0 0 33 33"><path d="M13.5 10.5l6 6-6 6" fill="none" stroke="#32387f" stroke-width="2" stroke-linecap="round" stroke-linejoin="round"/></svg></div>
<div class="pg" style="left:1204px"><svg width="33" height="33" viewBox="0 0 33 33"><path d="M21.200 10.300v12.400M12.600 10.800l5.700 5.700-5.700 5.700" fill="none" stroke="#32387f" stroke-width="2" stroke-linecap="round" stroke-linejoin="round"/></svg></div>
</div>

<div class="abs" id="fab">
<svg width="55" height="45" viewBox="1850 1473 55 45"><circle cx="1868.800" cy="1490.700" r="5.100" fill="#fff"/><path d="M1860.200 1503.800v-2.600c0-3.200 2.100-5.300 4.700-5.500 1.100 1 2.500 1.500 3.900 1.500s2.800-.5 3.900-1.500c2.600.2 4.700 2.300 4.700 5.500v2.600c0 1.500-1 2.500-2.500 2.500h-12.200c-1.500 0-2.500-1-2.500-2.500z" fill="#fff"/><path d="M1889.400 1490v11M1883.900 1495.500h11" stroke="#fff" stroke-width="2.500" stroke-linecap="round"/></svg>
</div>

</body>
</html>
